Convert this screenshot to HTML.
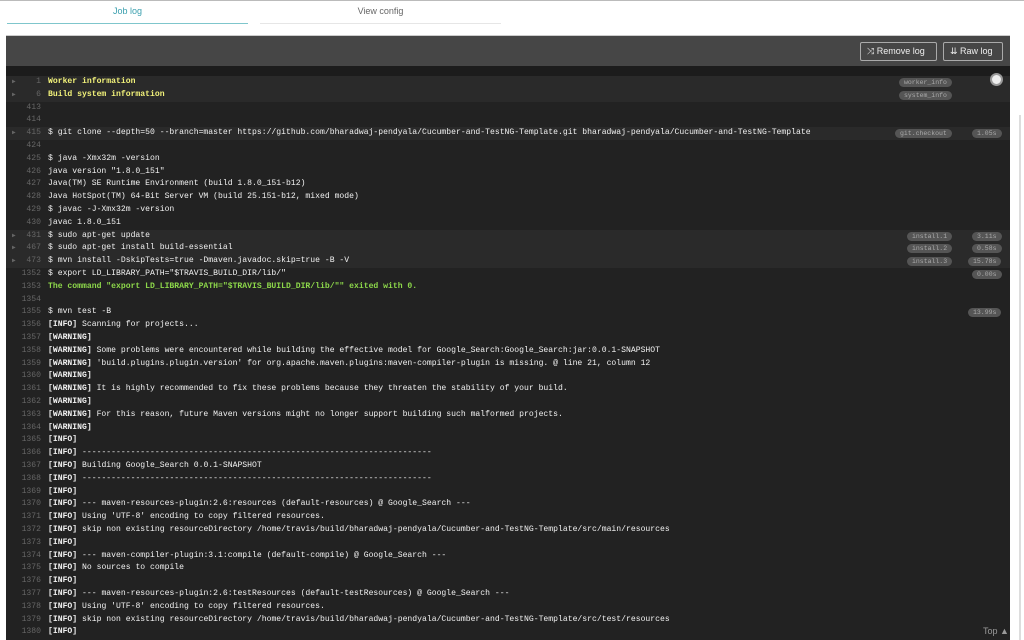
<!DOCTYPE html>
<html><head><meta charset="utf-8"><style>
*{margin:0;padding:0;box-sizing:border-box}
body{width:1024px;height:640px;overflow:hidden;background:#fff;font-family:"Liberation Sans",sans-serif;position:relative}
.topline{position:absolute;left:0;top:0;width:1024px;height:1px;background:#bbb}
.tab{position:absolute;top:6px;font-size:9px;text-align:center;height:18px}
.t1{left:7px;width:241px;color:#3a9fae;border-bottom:1px solid #7fc6cc}
.t2{left:260px;width:241px;color:#666;border-bottom:1px solid #e6e6e6}
.panel{position:absolute;left:6px;top:35px;width:1004px;height:605px;background:#222;border-top:1px solid #ccc}
.hdr{position:absolute;left:0;top:0;width:1004px;height:30px;background:#464646}
.btn{position:absolute;top:6px;height:19px;border:1px solid #aaa;border-radius:2px;color:#eee;font-size:9px;line-height:17px;padding:0 6px}
.strip{position:absolute;left:0;top:30px;width:1004px;height:10px;background:#1c1c1c}
.ln{position:absolute;left:0;width:1004px;height:12.8px;font-family:"Liberation Mono",monospace;font-size:8.1px;line-height:12.8px;color:#f1f1f1;white-space:pre}
.ln.f{background:#2a2a2a}
.ln .n{position:absolute;left:0;width:35px;text-align:right;color:#666}
.ln .a{position:absolute;left:6px;color:#666;font-size:6px}
.ln .c{position:absolute;left:42px}
.y{color:#f2f27a;font-weight:bold}
.g{color:#8dd84a;font-weight:bold}
b{font-weight:bold}
.tag{position:absolute;height:9px;top:2px;border-radius:5px;background:#555;color:#aaa;font-size:6.5px;line-height:9px;padding:0 5px}
.right{position:absolute;left:1010px;top:35px;width:14px;height:605px;background:#fff}
.right i{position:absolute;left:9px;top:80px;width:2px;height:525px;background:#ddd}
.lines{position:absolute;left:0;top:1px;width:1004px;height:600px}
</style></head><body>
<div class="topline"></div>
<div class="tab t1">Job log</div>
<div class="tab t2">View config</div>
<div class="panel">
<div class="hdr">
<div class="btn" style="left:854px;width:77px">⤨ Remove log</div>
<div class="btn" style="left:937px;width:60px">⇊ Raw log</div>
</div>
<div class="strip"></div>
<div class="lines">
<div class="ln f" style="top:39px"><span class="a">▶</span><span class="n">1</span><span class="c y">Worker information</span><span class="tag" style="left:893px">worker_info</span></div>
<div class="ln f" style="top:51.8px"><span class="a">▶</span><span class="n">6</span><span class="c y">Build system information</span><span class="tag" style="left:893px">system_info</span></div>
<div class="ln" style="top:64.6px"><span class="n">413</span></div>
<div class="ln" style="top:77.4px"><span class="n">414</span></div>
<div class="ln f" style="top:90.2px"><span class="a">▶</span><span class="n">415</span><span class="c">$ git clone --depth=50 --branch=master https://github.com/bharadwaj-pendyala/Cucumber-and-TestNG-Template.git bharadwaj-pendyala/Cucumber-and-TestNG-Template</span><span class="tag" style="left:889px">git.checkout</span><span class="tag" style="left:966px">1.05s</span></div>
<div class="ln" style="top:103px"><span class="n">424</span></div>
<div class="ln" style="top:115.8px"><span class="n">425</span><span class="c">$ java -Xmx32m -version</span></div>
<div class="ln" style="top:128.6px"><span class="n">426</span><span class="c">java version "1.8.0_151"</span></div>
<div class="ln" style="top:141.4px"><span class="n">427</span><span class="c">Java(TM) SE Runtime Environment (build 1.8.0_151-b12)</span></div>
<div class="ln" style="top:154.2px"><span class="n">428</span><span class="c">Java HotSpot(TM) 64-Bit Server VM (build 25.151-b12, mixed mode)</span></div>
<div class="ln" style="top:167px"><span class="n">429</span><span class="c">$ javac -J-Xmx32m -version</span></div>
<div class="ln" style="top:179.8px"><span class="n">430</span><span class="c">javac 1.8.0_151</span></div>
<div class="ln f" style="top:192.6px"><span class="a">▶</span><span class="n">431</span><span class="c">$ sudo apt-get update</span><span class="tag" style="left:901px">install.1</span><span class="tag" style="left:966px">3.11s</span></div>
<div class="ln f" style="top:205.4px"><span class="a">▶</span><span class="n">467</span><span class="c">$ sudo apt-get install build-essential</span><span class="tag" style="left:901px">install.2</span><span class="tag" style="left:966px">0.58s</span></div>
<div class="ln f" style="top:218.2px"><span class="a">▶</span><span class="n">473</span><span class="c">$ mvn install -DskipTests=true -Dmaven.javadoc.skip=true -B -V</span><span class="tag" style="left:901px">install.3</span><span class="tag" style="left:962px">15.78s</span></div>
<div class="ln" style="top:231px"><span class="n">1352</span><span class="c">$ export LD_LIBRARY_PATH="$TRAVIS_BUILD_DIR/lib/"</span><span class="tag" style="left:966px">0.00s</span></div>
<div class="ln" style="top:243.8px"><span class="n">1353</span><span class="c g">The command "export LD_LIBRARY_PATH="$TRAVIS_BUILD_DIR/lib/"" exited with 0.</span></div>
<div class="ln" style="top:256.6px"><span class="n">1354</span></div>
<div class="ln" style="top:269.4px"><span class="n">1355</span><span class="c">$ mvn test -B</span><span class="tag" style="left:962px">13.99s</span></div>
<div class="ln" style="top:282.2px"><span class="n">1356</span><span class="c"><b>[INFO]</b> Scanning for projects...</span></div>
<div class="ln" style="top:295px"><span class="n">1357</span><span class="c"><b>[WARNING]</b></span></div>
<div class="ln" style="top:307.8px"><span class="n">1358</span><span class="c"><b>[WARNING]</b> Some problems were encountered while building the effective model for Google_Search:Google_Search:jar:0.0.1-SNAPSHOT</span></div>
<div class="ln" style="top:320.6px"><span class="n">1359</span><span class="c"><b>[WARNING]</b> 'build.plugins.plugin.version' for org.apache.maven.plugins:maven-compiler-plugin is missing. @ line 21, column 12</span></div>
<div class="ln" style="top:333.4px"><span class="n">1360</span><span class="c"><b>[WARNING]</b></span></div>
<div class="ln" style="top:346.2px"><span class="n">1361</span><span class="c"><b>[WARNING]</b> It is highly recommended to fix these problems because they threaten the stability of your build.</span></div>
<div class="ln" style="top:359px"><span class="n">1362</span><span class="c"><b>[WARNING]</b></span></div>
<div class="ln" style="top:371.8px"><span class="n">1363</span><span class="c"><b>[WARNING]</b> For this reason, future Maven versions might no longer support building such malformed projects.</span></div>
<div class="ln" style="top:384.6px"><span class="n">1364</span><span class="c"><b>[WARNING]</b></span></div>
<div class="ln" style="top:397.4px"><span class="n">1365</span><span class="c"><b>[INFO]</b></span></div>
<div class="ln" style="top:410.2px"><span class="n">1366</span><span class="c"><b>[INFO]</b> ------------------------------------------------------------------------</span></div>
<div class="ln" style="top:423px"><span class="n">1367</span><span class="c"><b>[INFO]</b> Building Google_Search 0.0.1-SNAPSHOT</span></div>
<div class="ln" style="top:435.8px"><span class="n">1368</span><span class="c"><b>[INFO]</b> ------------------------------------------------------------------------</span></div>
<div class="ln" style="top:448.6px"><span class="n">1369</span><span class="c"><b>[INFO]</b></span></div>
<div class="ln" style="top:461.4px"><span class="n">1370</span><span class="c"><b>[INFO]</b> --- maven-resources-plugin:2.6:resources (default-resources) @ Google_Search ---</span></div>
<div class="ln" style="top:474.2px"><span class="n">1371</span><span class="c"><b>[INFO]</b> Using 'UTF-8' encoding to copy filtered resources.</span></div>
<div class="ln" style="top:487px"><span class="n">1372</span><span class="c"><b>[INFO]</b> skip non existing resourceDirectory /home/travis/build/bharadwaj-pendyala/Cucumber-and-TestNG-Template/src/main/resources</span></div>
<div class="ln" style="top:499.8px"><span class="n">1373</span><span class="c"><b>[INFO]</b></span></div>
<div class="ln" style="top:512.6px"><span class="n">1374</span><span class="c"><b>[INFO]</b> --- maven-compiler-plugin:3.1:compile (default-compile) @ Google_Search ---</span></div>
<div class="ln" style="top:525.4px"><span class="n">1375</span><span class="c"><b>[INFO]</b> No sources to compile</span></div>
<div class="ln" style="top:538.2px"><span class="n">1376</span><span class="c"><b>[INFO]</b></span></div>
<div class="ln" style="top:551px"><span class="n">1377</span><span class="c"><b>[INFO]</b> --- maven-resources-plugin:2.6:testResources (default-testResources) @ Google_Search ---</span></div>
<div class="ln" style="top:563.8px"><span class="n">1378</span><span class="c"><b>[INFO]</b> Using 'UTF-8' encoding to copy filtered resources.</span></div>
<div class="ln" style="top:576.6px"><span class="n">1379</span><span class="c"><b>[INFO]</b> skip non existing resourceDirectory /home/travis/build/bharadwaj-pendyala/Cucumber-and-TestNG-Template/src/test/resources</span></div>
<div class="ln" style="top:589.4px"><span class="n">1380</span><span class="c"><b>[INFO]</b></span></div>
</div>
<div style="position:absolute;left:984px;top:37px;width:13px;height:13px;border-radius:50%;background:#eee;border:2px solid #999"></div>
<div style="position:absolute;left:977px;top:590px;color:#999;font-size:9px">Top ▲</div>
</div>
<div class="right"><i></i></div>
</body></html>
